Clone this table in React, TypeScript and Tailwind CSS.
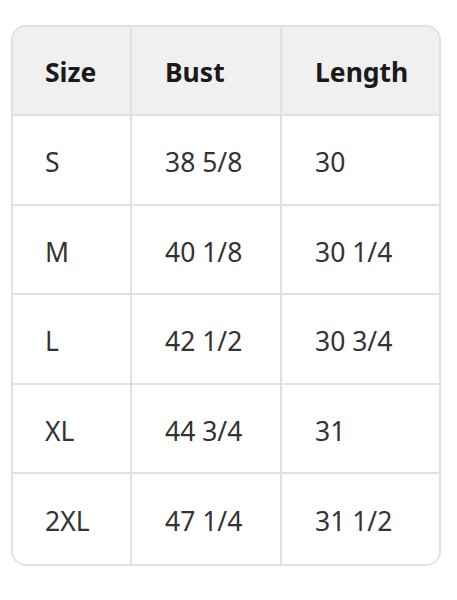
import React from "react";

const rows = [
  ["S", "38 5/8", "30"],
  ["M", "40 1/8", "30 1/4"],
  ["L", "42 1/2", "30 3/4"],
  ["XL", "44 3/4", "31"],
  ["2XL", "47 1/4", "31 1/2"],
];

export default function App() {
  return (
    <div
      className="w-[457px] h-[600px] bg-white pt-[25px] pl-[11px]"
      style={{ fontFamily: '"Noto Sans", "Open Sans", sans-serif' }}
    >
      <div className="w-[430px] rounded-[15px] border-2 border-[#dde1e8] overflow-hidden">
        <div className="grid grid-cols-[119px_150px_157px] h-[89px] bg-[#f0f0f0] border-b-2 border-[#dde1e8]">
          {["Size", "Bust", "Length"].map((h, i) => (
            <div
              key={h}
              className={`flex items-center pt-[5px] text-[26.5px] font-bold text-[#1a1a1a] ${
                i < 2 ? "border-r-2 border-[#dde1e8]" : ""
              } ${i > 0 ? "pl-[33px]" : "pl-[32px]"}`}
            >
              {h}
            </div>
          ))}
        </div>
        {rows.map((r, ri) => (
          <div
            key={ri}
            className={`grid grid-cols-[119px_150px_157px] h-[89.5px] bg-white ${
              ri < rows.length - 1 ? "border-b-2 border-[#dde1e8]" : ""
            }`}
          >
            {r.map((c, i) => (
              <div
                key={i}
                className={`flex items-center pt-[7px] text-[26.5px] text-[#333333] ${
                  i < 2 ? "border-r-2 border-[#dde1e8]" : ""
                } ${i > 0 ? "pl-[33px]" : "pl-[32px]"}`}
              >
                {c}
              </div>
            ))}
          </div>
        ))}
      </div>
    </div>
  );
}
